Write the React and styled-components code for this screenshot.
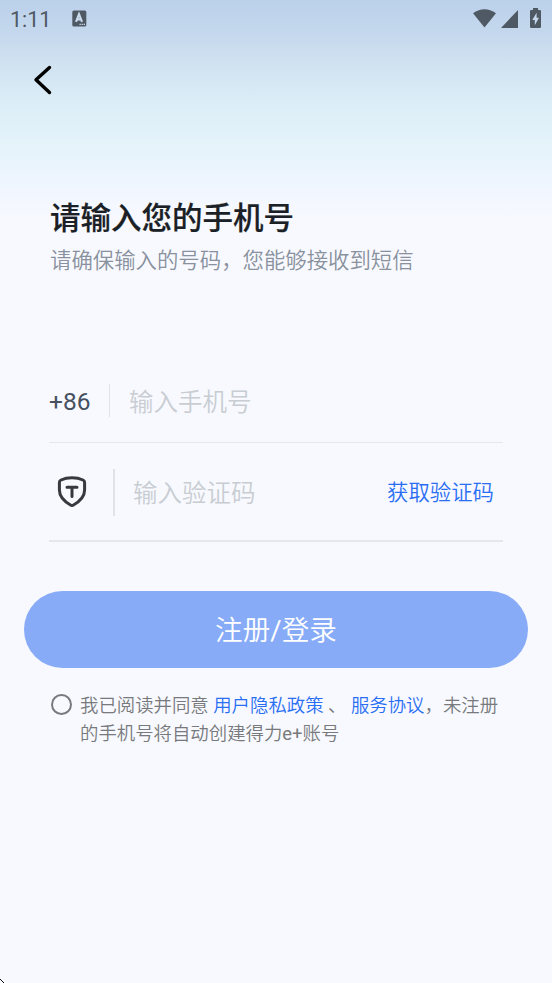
import React, { useState } from 'react';
import styled, { createGlobalStyle } from 'styled-components';

const GlobalStyle = createGlobalStyle`
  * {
    box-sizing: border-box;
  }

  body {
    margin: 0;
    background-color: #f8f9ff;
    font-family: Roboto, 'Noto Sans CJK SC', sans-serif;
  }

  input, button {
    font-family: inherit;
    border: none;
    padding: 0;
    background: none;
    outline: none;
  }
`;

const Screen = styled.div`
  position: relative;
  display: flex;
  flex-direction: column;
  height: 983px;
  overflow: hidden;
  background: linear-gradient(
    180deg,
    #bbd1ea 0,
    #c5d8ed 35px,
    #cfe1f0 60px,
    #dceef7 105px,
    #e3f2fa 138px,
    #eaf4fc 165px,
    #f1f6ff 190px,
    #f8f9ff 220px
  );
`;

const StatusBar = styled.div`
  display: flex;
  align-items: center;
  height: 37px;
  padding: 0 9px 0 10px;
  color: #4f5963;
`;

const Clock = styled.span`
  width: 62px;
  font-size: 21.5px;
  line-height: 37px;
  padding-top: 2px;
`;

const StatusIcons = styled.div`
  display: flex;
  align-items: center;
  margin-left: auto;
`;

const NavBar = styled.div`
  height: 86px;
  padding: 26px 0 0 31px;
`;

const BackButton = styled.button`
  display: block;
  width: 24px;
  height: 34px;
`;

const Heading = styled.div`
  height: 236px;
  padding: 75px 49px 0 50px;
`;

const Title = styled.h1`
  margin: 0;
  color: #1b1f26;
  font-size: 30.5px;
  font-weight: 500;
  line-height: 42px;
  -webkit-text-stroke: 0.2px #1b1f26;
`;

const Subtitle = styled.p`
  margin: 0;
  color: #88919d;
  font-size: 21.4px;
  font-weight: 350;
  line-height: 41px;
`;

const Form = styled.div`
  margin: 0 49px;
`;

const Field = styled.div`
  display: flex;
  align-items: center;
  height: ${props => props.height}px;
  border-bottom: ${props => props.line}px solid #e5e7ec;
`;

const AreaCode = styled.span`
  width: 60px;
  padding-top: 2px;
  color: #455160;
  font-size: 24.5px;
`;

const ShieldBox = styled.span`
  display: flex;
  width: 64px;
  padding-left: 7px;
`;

const Divider = styled.span`
  flex: none;
  width: ${props => props.thick ? 2 : 1}px;
  height: ${props => props.height}px;
  margin-top: ${props => props.thick ? 2 : 0}px;
  margin-right: ${props => props.thick ? 18 : 19}px;
  background-color: #e0e3e8;
`;

const Input = styled.input`
  flex: 1;
  min-width: 0;
  height: 40px;
  padding-top: 4px;
  color: #455160;
  font-size: 24.5px;
  font-weight: 350;

  &::placeholder {
    color: #c8cdd2;
    opacity: 1;
  }
`;

const CodeButton = styled.button`
  margin-right: 9px;
  padding-bottom: 2px;
  color: #2a6ff3;
  font-size: 21.4px;
  font-weight: 350;
`;

const SubmitButton = styled.button`
  height: 77px;
  margin: 49px 24px 0;
  padding-bottom: 3px;
  border-radius: 39px;
  background-color: #87abf7;
  color: #fff;
  font-size: 27.6px;
  font-weight: 350;
`;

const Agreement = styled.div`
  display: flex;
  padding: 23px 40px 0 51px;
`;

const Radio = styled.button`
  flex: none;
  width: 21px;
  height: 21px;
  margin: 3px 8px 0 0;
  border: 2px solid #77797c;
  border-radius: 50%;
  background-color: ${props => props.checked ? '#2a6ff3' : 'transparent'};
`;

const Terms = styled.p`
  margin: 1px 0 0;
  color: #77797c;
  font-size: 18.4px;
  font-weight: 350;
  line-height: 28px;
  white-space: nowrap;
`;

const Link = styled.span`
  color: #2a6ff3;
`;

const Latin = styled.span`
  font-weight: 400;
`;

const Pointer = styled.svg`
  position: absolute;
  left: 0;
  bottom: 0;
`;

const App = () => {

  const [phone, setPhone] = useState('');
  const [code, setCode] = useState('');
  const [agreed, setAgreed] = useState(false);

  return (
    <>
      <GlobalStyle />
      <Screen>
        <StatusBar>
          <Clock>1:11</Clock>
          <svg width="15" height="17" viewBox="0 0 15 17">
            <rect x="0.3" y="0.4" width="14" height="16" rx="1.5" fill="currentColor" />
            <path d="M4 11.8L7 4.2L10 11.8M5 9.4H9" fill="none" stroke="#cbdcef" strokeWidth="2.1" />
            <path d="M7.5 14.3H13" stroke="#cbdcef" strokeWidth="1.3" strokeDasharray="1.3 0.8" />
          </svg>
          <StatusIcons>
            <svg width="70" height="22" viewBox="0 0 70 22" fill="currentColor">
              <path d="M0 5.3Q11.5 -2.7 23 5.3L11.5 19.5Z" />
              <path d="M45 2V20H28Z" />
              <path d="M57 3.2Q57 2 58.2 2H60V0H65V2H66.8Q68 2 68 3.2V18.8Q68 20 66.8 20H58.2Q57 20 57 18.8Z" />
              <path d="M63.6 4.8L59.3 12H61.8V17.3L66 9.8H63.6Z" fill="#c6d8ed" />
            </svg>
          </StatusIcons>
        </StatusBar>
        <NavBar>
          <BackButton aria-label="返回">
            <svg width="24" height="34" viewBox="0 0 24 34" fill="none">
              <path d="M18.5 4.5L5 16.8L18.5 29.5" stroke="#000" strokeWidth="3.4" strokeLinecap="round" strokeLinejoin="round" />
            </svg>
          </BackButton>
        </NavBar>
        <Heading>
          <Title>请输入您的手机号</Title>
          <Subtitle>请确保输入的号码，您能够接收到短信</Subtitle>
        </Heading>
        <Form>
          <Field height={84} line={1}>
            <AreaCode>+86</AreaCode>
            <Divider height={33} />
            <Input placeholder="输入手机号" value={phone} onChange={e => setPhone(e.target.value)} />
          </Field>
          <Field height={99} line={2}>
            <ShieldBox>
              <svg width="32" height="34" viewBox="0 0 32 34" fill="none" stroke="#37393f" strokeLinecap="round" strokeLinejoin="round">
                <path d="M16 2.8C12 2.8 8 3.6 5 5Q3.4 5.8 3.4 7.5V15C3.4 22.5 8.5 26.5 14.5 30Q16 31 17.5 30C23.5 26.5 28.6 22.5 28.6 15V7.5Q28.6 5.8 27 5C24 3.6 20 2.8 16 2.8Z" strokeWidth="3" />
                <path d="M11 12.3H21M16 12.3V21.5" strokeWidth="3" />
              </svg>
            </ShieldBox>
            <Divider thick height={47} />
            <Input placeholder="输入验证码" value={code} onChange={e => setCode(e.target.value)} />
            <CodeButton>获取验证码</CodeButton>
          </Field>
        </Form>
        <SubmitButton>注册<Latin>/</Latin>登录</SubmitButton>
        <Agreement>
          <Radio aria-label="同意" checked={agreed} onClick={() => setAgreed(!agreed)} />
          <Terms>
            我已阅读并同意 <Link>用户隐私政策</Link> 、 <Link>服务协议</Link>，未注册<br />
            的手机号将自动创建得力<Latin>e+</Latin>账号
          </Terms>
        </Agreement>
        <Pointer width="4" height="4" viewBox="0 0 4 4">
          <path d="M0 0H1V1H0ZM1 1H2V2H1ZM2 2H3V3H2ZM3 3H4V4H3Z" fill="#111" />
        </Pointer>
      </Screen>
    </>
  );
};

export default App;
